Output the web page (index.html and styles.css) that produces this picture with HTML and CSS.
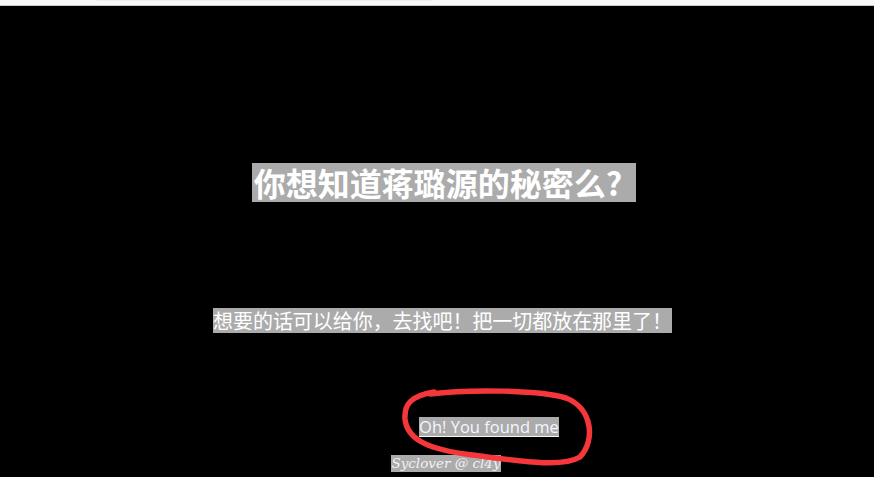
FILE: index.html
```html
<!DOCTYPE html>
<html lang="zh">
<head>
<meta charset="utf-8">
<link rel="stylesheet" href="styles.css">
<title>Secret</title>
</head>
<body>
<div class="topbar"><div class="topbar-inner"></div></div>
<main class="page">
  <div class="row row-title"><h1 class="hl title">你想知道蒋璐源的秘密么?</h1></div>
  <div class="row row-sub"><span class="hl sub">想要的话可以给你，去找吧！把一切都放在那里了！</span></div>
  <div class="row row-link"><a class="hl link" href="#">Oh! You found me</a></div>
  <div class="row row-sign"><span class="hl sign">Syclover @ cl4y</span></div>
</main>
<svg class="scribble" width="874" height="477" viewBox="0 0 874 477">
  <path d="M 430 394 C 470 389, 540 390, 566 398 C 592 408, 596 440, 580 457 C 562 468, 520 461, 472 455 C 432 450, 407 441, 405 419 C 404 404, 411 396, 434 392" fill="none" stroke="#f5363a" stroke-width="5.5" stroke-linecap="round" stroke-linejoin="round"/>
</svg>
</body>
</html>
```
FILE: styles.css
```css
html, body {
  margin: 0;
  padding: 0;
  background: #000;
  height: 100%;
  overflow: hidden;
}
body {
  position: relative;
  font-family: "Noto Sans CJK SC", "Noto Sans", sans-serif;
}
.topbar {
  height: 5px;
  background: #f8f8fa;
  border-bottom: 1px solid #c9c9cc;
  display: flex;
}
.topbar-inner {
  width: 336px;
  margin-left: 97px;
  height: 1px;
  background: #ececf0;
}
.page {
  display: flex;
  flex-direction: column;
}
.row {
  display: flex;
  justify-content: center;
}
.hl {
  background: #ababab;
  color: #fff;
}
.title {
  margin: 157px 0 0 14px;
  font-size: 32px;
  font-weight: 700;
  line-height: 39px;
  height: 39px;
  padding: 0 14px 0 2px;
}
.sub {
  margin: 106px 0 0 11px;
  font-size: 20px;
  line-height: 25px;
  height: 25px;
  letter-spacing: -0.05px;
}
.link {
  margin: 84px 0 0 104px;
  font-family: "Open Sans", "Noto Sans", sans-serif;
  font-size: 16.5px;
  line-height: 20px;
  height: 20px;
  text-decoration: underline;
  text-underline-offset: 3px;
  color: #f4f6ff;
}
.sign {
  margin: 18px 0 0 18px;
  font-family: "DejaVu Serif", "Liberation Serif", serif;
  font-style: italic;
  font-size: 13.5px;
  line-height: 17px;
  height: 17px;
  color: #f2f2f2;
}
.scribble {
  position: absolute;
  left: 0;
  top: 0;
  pointer-events: none;
}
```
